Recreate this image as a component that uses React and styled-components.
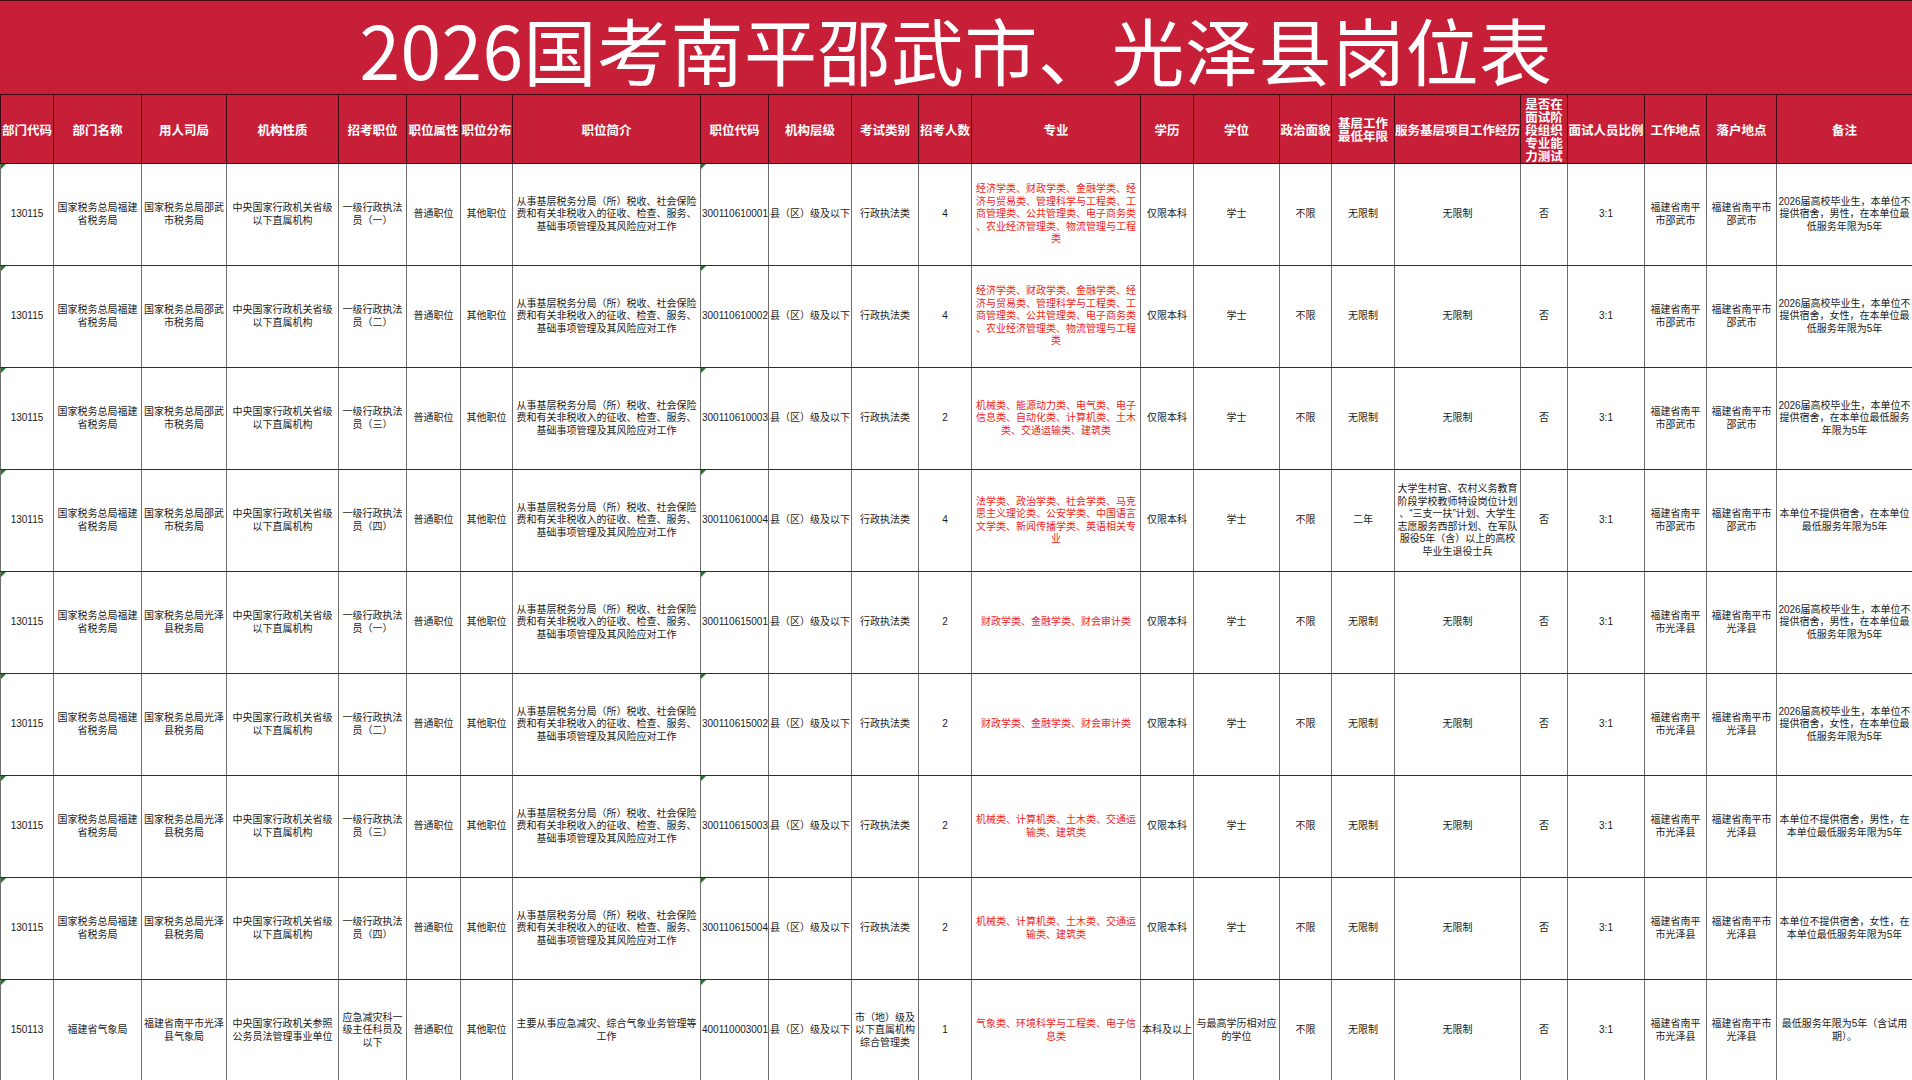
import React from 'react';
import styled, { createGlobalStyle } from 'styled-components';

const RED = '#c81f38';

const colWidths = [53, 88, 85, 112, 68, 54, 52, 188, 68, 83, 67, 53, 169, 53, 86, 52, 63, 126, 47, 77, 62, 70, 136];

const headers = [
  '部门代码', '部门名称', '用人司局', '机构性质', '招考职位', '职位属性', '职位分布', '职位简介',
  '职位代码', '机构层级', '考试类别', '招考人数', '专业', '学历', '学位', '政治面貌',
  '基层工作最低年限', '服务基层项目工作经历', '是否在面试阶段组织专业能力测试', '面试人员比例',
  '工作地点', '落户地点', '备注',
];

// 专业 column is red in the sheet, 部门代码 / 职位代码 carry the green excel marker
const RED_COL = 12;
const MARK_COLS = [0, 8];

const intro = '从事基层税务分局（所）税收、社会保险费和有关非税收入的征收、检查、服务、基础事项管理及其风险应对工作';
const econ = '经济学类、财政学类、金融学类、经济与贸易类、管理科学与工程类、工商管理类、公共管理类、电子商务类、农业经济管理类、物流管理与工程类';
const mech = '机械类、能源动力类、电气类、电子信息类、自动化类、计算机类、土木类、交通运输类、建筑类';
const law = '法学类、政治学类、社会学类、马克思主义理论类、公安学类、中国语言文学类、新闻传播学类、英语相关专业';
const fin = '财政学类、金融学类、财会审计类';
const mech2 = '机械类、计算机类、土木类、交通运输类、建筑类';
const service = '大学生村官、农村义务教育阶段学校教师特设岗位计划、“三支一扶”计划、大学生志愿服务西部计划、在军队服役5年（含）以上的高校毕业生退役士兵';

const taxRow = (office, post, code, count, major, place, note, extra = {}) => {
  const r = [
    '130115', '国家税务总局福建省税务局', office, '中央国家行政机关省级以下直属机构', post,
    '普通职位', '其他职位', intro, code, '县（区）级及以下', '行政执法类', count, major,
    '仅限本科', '学士', '不限', '无限制', '无限制', '否', '3:1', place, place, note,
  ];
  Object.entries(extra).forEach(([i, v]) => { r[i] = v; });
  return r;
};

const sw = '国家税务总局邵武市税务局';
const gz = '国家税务总局光泽县税务局';
const swPlace = '福建省南平市邵武市';
const gzPlace = '福建省南平市光泽县';

const rows = [
  taxRow(sw, '一级行政执法员（一）', '300110610001', '4', econ, swPlace, '2026届高校毕业生，本单位不提供宿舍，男性，在本单位最低服务年限为5年'),
  taxRow(sw, '一级行政执法员（二）', '300110610002', '4', econ, swPlace, '2026届高校毕业生，本单位不提供宿舍，女性，在本单位最低服务年限为5年'),
  taxRow(sw, '一级行政执法员（三）', '300110610003', '2', mech, swPlace, '2026届高校毕业生，本单位不提供宿舍，在本单位最低服务年限为5年'),
  taxRow(sw, '一级行政执法员（四）', '300110610004', '4', law, swPlace, '本单位不提供宿舍，在本单位最低服务年限为5年', { 16: '二年', 17: service }),
  taxRow(gz, '一级行政执法员（一）', '300110615001', '2', fin, gzPlace, '2026届高校毕业生，本单位不提供宿舍，男性，在本单位最低服务年限为5年'),
  taxRow(gz, '一级行政执法员（二）', '300110615002', '2', fin, gzPlace, '2026届高校毕业生，本单位不提供宿舍，女性，在本单位最低服务年限为5年'),
  taxRow(gz, '一级行政执法员（三）', '300110615003', '2', mech2, gzPlace, '本单位不提供宿舍，男性，在本单位最低服务年限为5年'),
  taxRow(gz, '一级行政执法员（四）', '300110615004', '2', mech2, gzPlace, '本单位不提供宿舍，女性，在本单位最低服务年限为5年'),
  [
    '150113', '福建省气象局', '福建省南平市光泽县气象局', '中央国家行政机关参照公务员法管理事业单位',
    '应急减灾科一级主任科员及以下', '普通职位', '其他职位', '主要从事应急减灾、综合气象业务管理等工作',
    '400110003001', '县（区）级及以下', '市（地）级及以下直属机构综合管理类', '1',
    '气象类、环境科学与工程类、电子信息类', '本科及以上', '与最高学历相对应的学位', '不限',
    '无限制', '无限制', '否', '3:1', gzPlace, gzPlace, '最低服务年限为5年（含试用期）。',
  ],
];

const GlobalStyle = createGlobalStyle`
  html, body {
    margin: 0;
    padding: 0;
    background: #ffffff;
    overflow: hidden;
  }
`;

const Page = styled.div`
  width: 1912px;
  height: 1080px;
  overflow: hidden;
  background: #ffffff;
`;

const TitleBar = styled.div`
  height: 93px;
  background: ${RED};
  border-top: 1px solid #4a0d16;
  display: flex;
  align-items: center;
  justify-content: center;
`;

const Title = styled.h1`
  margin: 0;
  color: #ffffff;
  font-family: "Noto Sans CJK SC", sans-serif;
  font-weight: 400;
  font-size: 73px;
  line-height: 1.2;
  letter-spacing: 0.5px;
  padding-top: 2px;
`;

const Sheet = styled.table`
  width: 1912px;
  border-collapse: collapse;
  table-layout: fixed;
`;

const HeadCell = styled.th`
  height: 68px;
  padding: 0;
  background: ${RED};
  color: #ffffff;
  border: 1px solid #3a0a10;
  font-family: "Noto Sans CJK SC", sans-serif;
  font-weight: 700;
  font-size: 12.5px;
  line-height: 13px;
  text-align: center;
  vertical-align: middle;
  line-break: anywhere;
  overflow: hidden;
`;

const BodyRow = styled.tr`
  height: 102px;
`;

const Cell = styled.td`
  position: relative;
  padding: 0 1px;
  border-left: 1px solid #6f6f6f;
  border-right: 1px solid #6f6f6f;
  border-bottom: 1px solid #2e2e2e;
  color: ${(p) => (p.$red ? '#ee1c24' : '#1a1a1a')};
  font-family: "Liberation Sans", "Noto Sans CJK SC", sans-serif;
  font-size: 10px;
  line-height: 12.5px;
  text-align: center;
  vertical-align: middle;
  line-break: anywhere;
  white-space: ${(p) => (p.$nowrap ? 'nowrap' : 'normal')};
  overflow: hidden;
`;

const Marker = styled.span`
  position: absolute;
  top: 0;
  left: 0;
  width: 0;
  height: 0;
  border-top: 5px solid #1f7a2a;
  border-right: 5px solid transparent;
`;

export default function App() {
  return (
    <Page>
      <GlobalStyle />
      <TitleBar>
        <Title>2026国考南平邵武市、光泽县岗位表</Title>
      </TitleBar>
      <Sheet>
        <colgroup>
          {colWidths.map((w, i) => (
            <col key={i} style={{ width: w }} />
          ))}
        </colgroup>
        <thead>
          <tr>
            {headers.map((h) => (
              <HeadCell key={h}>{h}</HeadCell>
            ))}
          </tr>
        </thead>
        <tbody>
          {rows.map((row, ri) => (
            <BodyRow key={ri}>
              {row.map((v, ci) => (
                <Cell key={ci} $red={ci === RED_COL} $nowrap={ci === 8}>
                  {MARK_COLS.includes(ci) && <Marker />}
                  {v}
                </Cell>
              ))}
            </BodyRow>
          ))}
        </tbody>
      </Sheet>
    </Page>
  );
}
